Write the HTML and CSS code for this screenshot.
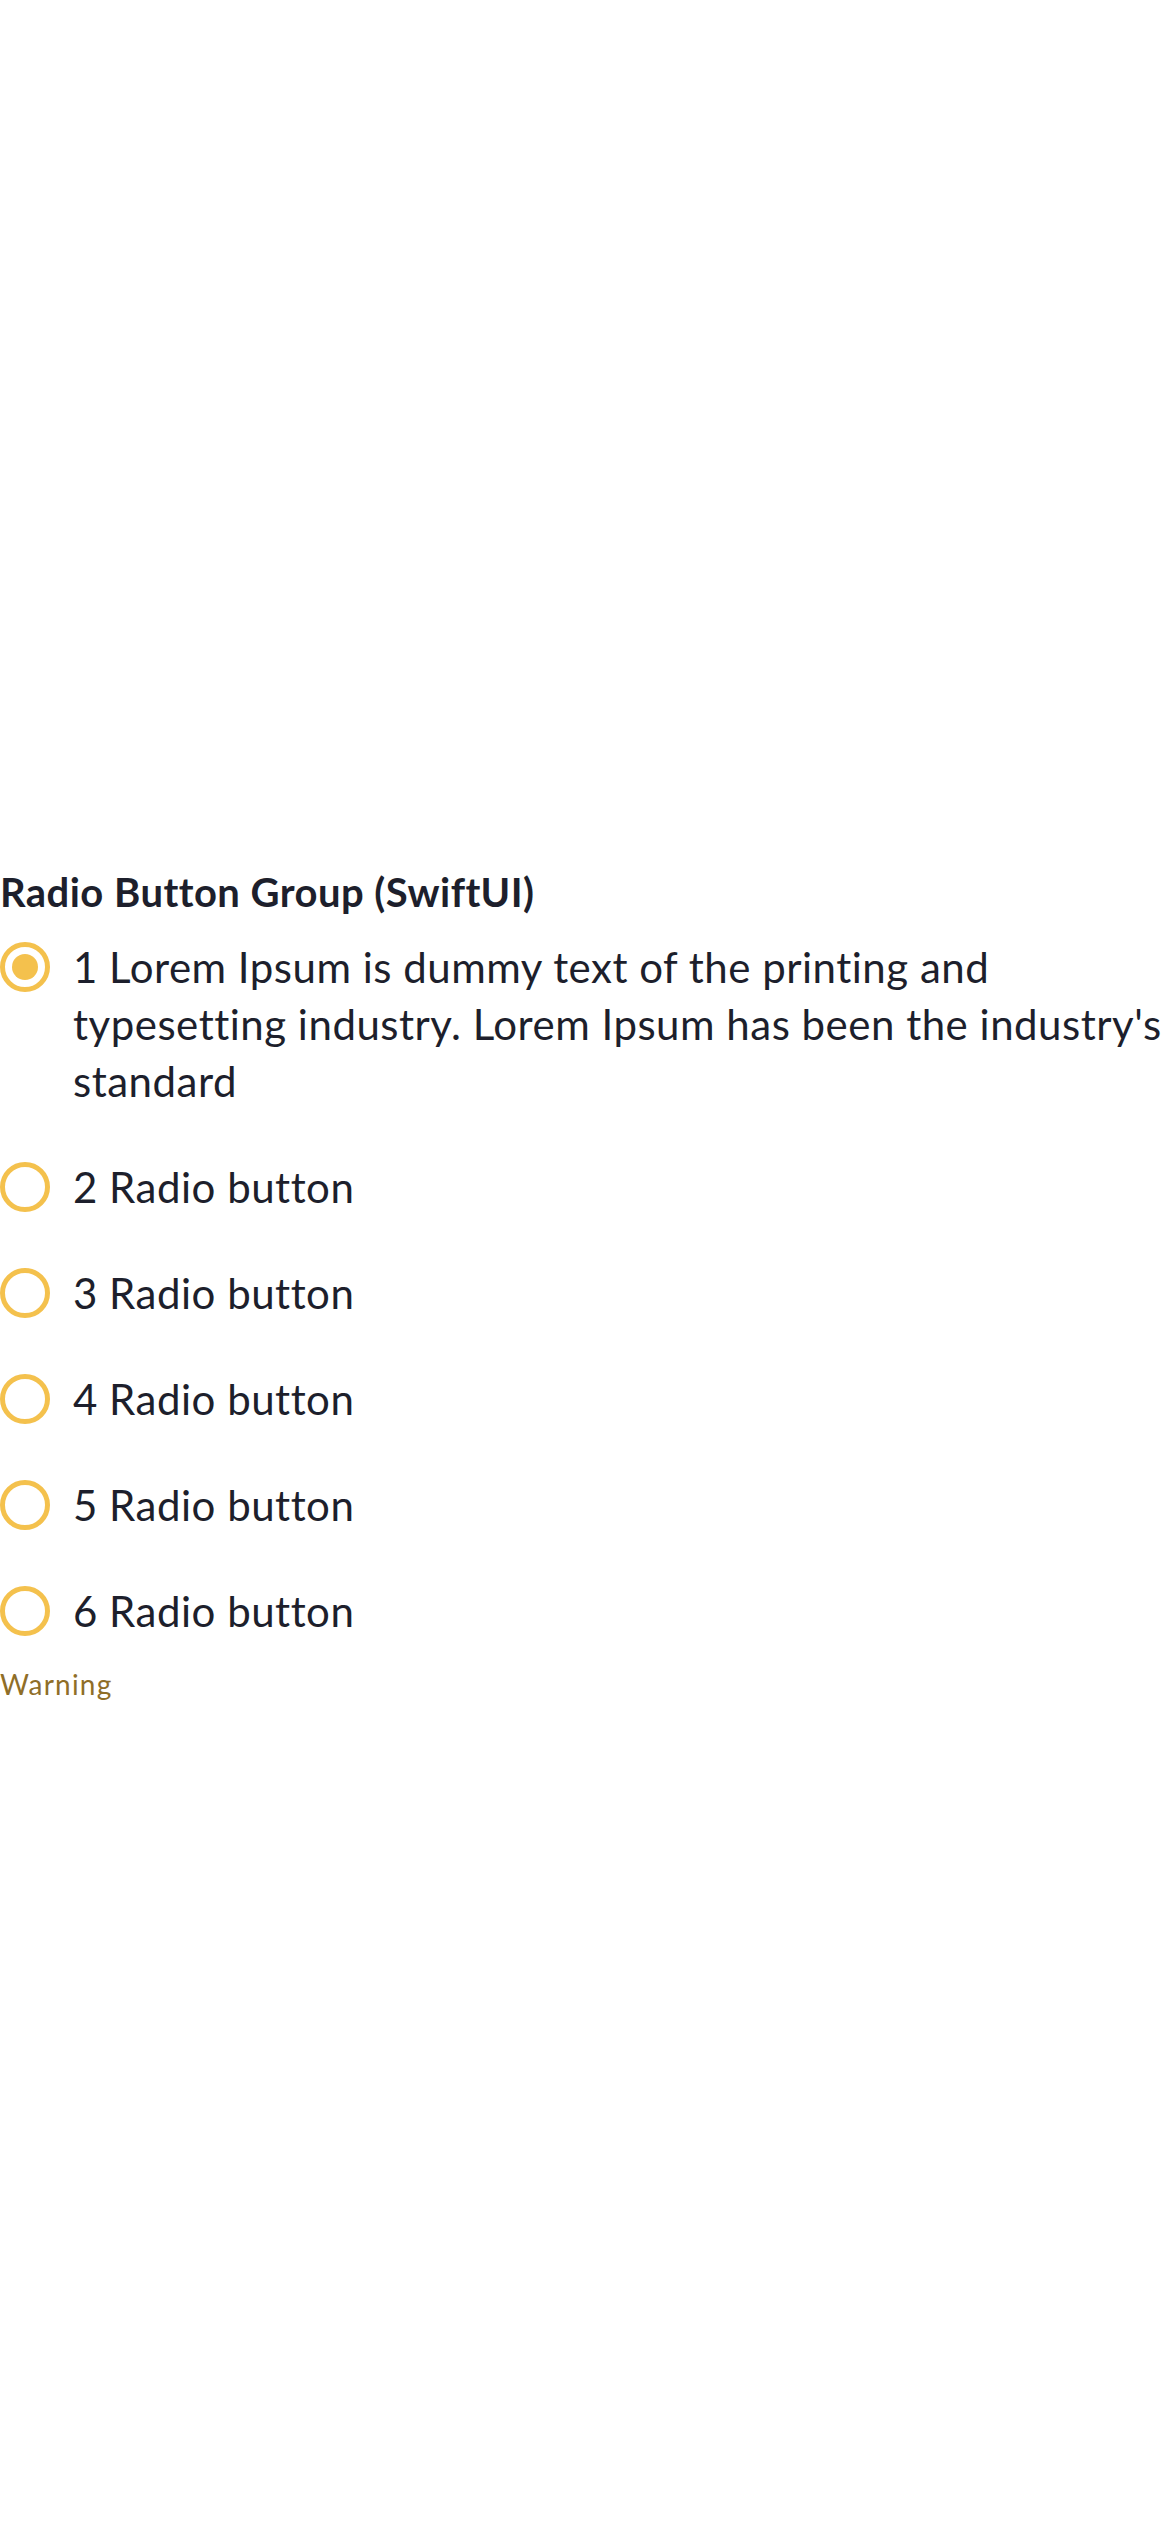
FILE: index.html
```html
<!DOCTYPE html>
<html lang="en">
<head>
<meta charset="utf-8">
<title>Radio Button Group (SwiftUI)</title>
<link rel="stylesheet" href="styles.css">
</head>
<body>
<main class="page">
  <section class="group">
    <h1 class="title">Radio Button Group (SwiftUI)</h1>
    <ul class="options">
      <li class="option selected"><span class="radio"></span><span class="label">1 Lorem Ipsum is dummy text of the printing and typesetting industry. Lorem Ipsum has been the industry's standard</span></li>
      <li class="option"><span class="radio"></span><span class="label">2 Radio button</span></li>
      <li class="option"><span class="radio"></span><span class="label">3 Radio button</span></li>
      <li class="option"><span class="radio"></span><span class="label">4 Radio button</span></li>
      <li class="option"><span class="radio"></span><span class="label">5 Radio button</span></li>
      <li class="option"><span class="radio"></span><span class="label">6 Radio button</span></li>
    </ul>
    <p class="warning">Warning</p>
  </section>
</main>
</body>
</html>
```

FILE: styles.css
```css
html, body {
  margin: 0;
  padding: 0;
  background: #ffffff;
}

body {
  font-family: Lato, "Noto Sans", sans-serif;
  color: #1d1f2c;
}

.page {
  padding-top: 868px;
}

.title {
  margin: 0 0 23px;
  font-size: 40px;
  line-height: 48px;
  font-weight: 700;
  letter-spacing: 0.45px;
  color: #1d1f2c;
}

.options {
  list-style: none;
  margin: 0;
  padding: 0;
  display: flex;
  flex-direction: column;
  gap: 49px;
}

.option {
  display: flex;
  align-items: flex-start;
  gap: 23px;
}

.radio {
  flex-shrink: 0;
  width: 50px;
  height: 50px;
  margin-top: 3px;
  box-sizing: border-box;
  border: 5px solid #f4c14d;
  border-radius: 50%;
  display: flex;
  align-items: center;
  justify-content: center;
}

.selected .radio::after {
  content: "";
  width: 26px;
  height: 26px;
  border-radius: 50%;
  background: #f4c14d;
}

.label {
  font-size: 42px;
  line-height: 57px;
  letter-spacing: 0.5px;
  color: #1d1f2c;
}

.warning {
  margin: 27px 0 0;
  font-size: 28px;
  line-height: 34px;
  letter-spacing: 1.2px;
  color: #8f6e28;
}
```
